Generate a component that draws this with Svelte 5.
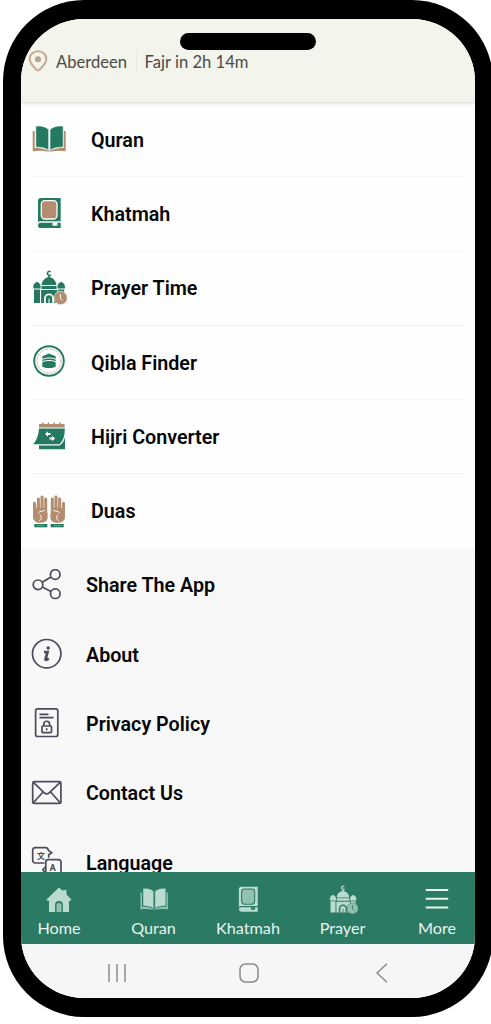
<script>
    let city = 'Aberdeen'
    let nextPrayer = 'Fajr in 2h 14m'

    const features = [
        { name: 'Quran', icon: 'quran' },
        { name: 'Khatmah', icon: 'khatmah' },
        { name: 'Prayer Time', icon: 'prayer' },
        { name: 'Qibla Finder', icon: 'qibla' },
        { name: 'Hijri Converter', icon: 'hijri' },
        { name: 'Duas', icon: 'duas' }
    ]

    const settings = [
        { name: 'Share The App', icon: 'share' },
        { name: 'About', icon: 'about' },
        { name: 'Privacy Policy', icon: 'privacy' },
        { name: 'Contact Us', icon: 'contact' },
        { name: 'Language', icon: 'language' }
    ]

    const tabs = [
        { name: 'Home', icon: 'home' },
        { name: 'Quran', icon: 'quran' },
        { name: 'Khatmah', icon: 'khatmah' },
        { name: 'Prayer', icon: 'prayer' },
        { name: 'More', icon: 'more' }
    ]
</script>

<!-- two-tone icons, shared by the list and the tab bar -->
{#snippet duotone(icon)}
    <svg class="duotone" viewBox="0 0 36 36">
        {#if icon === 'quran'}
            <path class="second" d="M1.700 9h2v17c5 0 9 .4 12.800 2.300h3.400C23.700 26.400 27.700 26 32.700 26V9h2v20.300c-6-.7-10-.7-14 .2h-5c-4-.9-8-.9-14-.2z" />
            <path class="first gap" d="M4.800 4.200c5-.8 9.700.2 12.900 3.500v20.800C14.500 26 10 25 4.800 25.200zM32.200 4.200c-5-.8-10 .2-13.200 3.500v20.800c3.200-2.500 8-3.500 13.200-3.300z" />
        {:else if icon === 'khatmah'}
            <path class="first" d="M10 2h19.700v23.300H9.500c-1 0-1.800.4-2.500 1V5a3 3 0 0 1 3-3z" />
            <rect class="second outline" x="10.300" y="4.700" width="15.700" height="18.300" rx="3.500" />
            <path class="first" d="M9.700 26.800h20V32h-20a2.600 2.600 0 0 1 0-5.200z" />
            <path class="cut" d="M21.500 26.800h5v3.400l-1.200-1-1.300 1-1.300-1-1.200 1z" />
        {:else if icon === 'prayer'}
            <path class="line" d="M19.700 1.800a2 2 0 1 0 .2 3" />
            <path class="first" d="M17.300 5h1.400v2c3.300 1.200 6.300 3.300 6.700 8H10.600c.4-4.700 3.400-6.800 6.700-8zM10.500 16h15v3h-15zM6 11.800c1.700 1 3.600 2.400 3.600 4.500v2.200H2.300v-2.200C2.300 14.200 4.300 12.800 6 11.800zM30.200 11.800c1.700 1 3.700 2.400 3.700 4.500v2.200h-7.400v-2.200c0-2.100 2-3.500 3.700-4.500zM3 19.500h6V33H3zM10.100 20h16.300v13H23v-4.500a5 5 0 0 0-10 0V33h-2.900zM27.300 19.500h5.900V27h-5.900zM14.800 33v-4.500a3.200 3.200 0 0 1 6.400 0V33z" />
            <path class="cutline" d="M18 28.500V33" />
            <circle class="second gap" cx="29.600" cy="28" r="6.700" />
            <path class="cutline" d="M29.400 24.200v4.200l2 2" />
        {:else if icon === 'qibla'}
            <circle class="ring" cx="18" cy="17" r="14.800" />
            <circle class="dots" cx="18" cy="17" r="12" />
            <path class="first" d="M11.300 12.300l6.700-2.800 6.700 2.800V22.500c-2.500 2-10.900 2-13.400 0z" />
            <path class="cutline" d="M11 15.300c4-1.800 10-1.800 14 0M11 17.800c4-1.800 10-1.800 14 0" />
        {:else if icon === 'hijri'}
            <path class="second" d="M8 5h3V3.400h1.500V5h4.200V3.400h1.500V5h4.300V3.400H24V5h4.300V3.400h1.500V5h3.800v3.600H8z" />
            <path class="first" d="M8 9.600h25.800c0 7-1.300 12.300-5.400 15.600H2.300C6 21 7.600 15.500 8 9.600z" />
            <path class="first" d="M34 18v12.300H8v-3.800h20.500c2.800-1.600 4.600-4.200 5.500-8.500z" />
            <path class="cut" d="M14 15l3-2.800v1.900h2.500v1.800H17v1.900zM24 19.500l-3-2.800v1.900h-2.500v1.800H21v1.900z" />
        {:else if icon === 'duas'}
            {@render hand('')}
            {@render hand('translate(36 0) scale(-1 1)')}
        {/if}
    </svg>
{/snippet}

{#snippet hand(flip)}
    <g transform={flip}>
        <path class="second" d="M2 10.500c0-2.200 2.800-2.200 3 0l.3 4.500h.6V6c0-2.100 3-2.100 3 0v8.500h.6V4c0-2.100 3.100-2.100 3.100 0v10.500h.6V6c0-2.100 3-2.100 3 0v12.800c0 .6.400 1 .4 2v3.700c0 3.500-3 5.300-7.300 5.300S2 27.500 2 24z" />
        <path class="cutline" d="M7.500 19.500c1.800-1.700 4.800-1 6.500-2.500M8.200 27.700c2.600-1.500 2.900-4 .6-6.200" />
        <rect class="first" x="3.300" y="31" width="13" height="3.300" />
        <path class="cutline thin" d="M5 32.600h8" />
    </g>
{/snippet}

{#snippet outlined(icon)}
    <svg class="outlined" viewBox="0 0 32 32">
        {#if icon === 'share'}
            <circle cx="24.200" cy="5.500" r="4.800" />
            <circle cx="7" cy="15.800" r="4.800" />
            <circle cx="24.300" cy="24.700" r="4.800" />
            <path d="M11.200 13.300L20 8M11.300 18l8.700 4.500" />
        {:else if icon === 'about'}
            <circle cx="15.700" cy="15.700" r="14.200" />
            <circle class="solid" cx="17.200" cy="10" r="1.700" />
            <path class="heavy" d="M13 14h3.500l-2 7.300c-.2.900.6 1.200 3.300-.6" />
        {:else if icon === 'privacy'}
            <rect x="4.600" y=".9" width="22.200" height="27.600" rx="2" />
            <path d="M8.500 6.300h9M8.500 9.600h14" />
            <rect x="11" y="18" width="9.500" height="6.600" rx=".8" />
            <path d="M12.800 18v-2c0-3.700 5.800-3.700 5.800 0v2M15.700 20.300v2" />
        {:else if icon === 'contact'}
            <rect x="1.700" y="4.700" width="28.200" height="21.700" rx="1.500" />
            <path d="M2.200 5.200L13 15.700c1.900 1.800 3.500 1.800 5.400 0L29.400 5.200M2.200 26l9.800-11M29.400 26l-9.800-11" />
        {:else if icon === 'language'}
            <path d="M13.500 17H4.200a2.500 2.500 0 0 1-2.500-2.500V4.200a2.500 2.500 0 0 1 2.500-2.500h10.300c1.600 0 2.500 1 3 2.800l3.200 2.300-3 2v3" />
            <path d="M14.800 30V16a2.400 2.400 0 0 1 2.400-2.400h10.400a2.400 2.400 0 0 1 2.400 2.400v14M14.800 20.500l-3 3.300 2.500 3" />
            <text x="6" y="12.500" class="glyph">文</text>
            <text x="18.600" y="25" class="letter">A</text>
        {/if}
    </svg>
{/snippet}

<div class="phone">
    <div class="island"></div>
    <header>
        <svg class="pin" viewBox="0 0 20 22">
            <path d="M10 1.300c-5 0-8.300 3.400-8.300 7.700 0 4.500 4.300 8 7 10.900.8.800 1.800.8 2.600 0 2.700-2.900 7-6.400 7-10.900 0-4.300-3.300-7.700-8.300-7.700z" />
            <circle cx="10" cy="9.300" r="3" />
        </svg>
        <span class="city">{city}</span>
        <span class="next">{nextPrayer}</span>
    </header>

    <main>
        <ul class="features">
            {#each features as item}
                <li>
                    {@render duotone(item.icon)}
                    <span>{item.name}</span>
                </li>
            {/each}
        </ul>
        <ul class="settings">
            {#each settings as item}
                <li>
                    {@render outlined(item.icon)}
                    <span>{item.name}</span>
                </li>
            {/each}
        </ul>
    </main>

    <nav>
        {#each tabs as tab}
            <div class="tab">
                {#if tab.icon === 'home'}
                    <svg class="duotone" viewBox="0 0 36 36">
                        <path class="first" d="M18 3l5 4.600V6h4v5.300L33 17.500 31.500 19H30v13.500h-7.300v-8.500a4.700 4.700 0 0 0-9.400 0v8.500H6V19H4.500L3 17.500z" />
                        <path class="second" d="M15 32.500v-8a3 3 0 0 1 6 0v8z" />
                    </svg>
                {:else if tab.icon === 'more'}
                    <svg class="duotone" viewBox="0 0 36 36">
                        <path class="bars" d="M4.500 6h27M4.500 16.500h27M4.500 27h27" />
                    </svg>
                {:else}
                    {@render duotone(tab.icon)}
                {/if}
                <span>{tab.name}</span>
            </div>
        {/each}
    </nav>

    <footer>
        <svg viewBox="0 0 22 22"><path d="M3 2v18M11 2v18M19 2v18" /></svg>
        <svg viewBox="0 0 22 22"><rect x="2" y="2" width="18" height="18" rx="5.500" /></svg>
        <svg viewBox="0 0 22 22"><path d="M16 1.700L6 11l10 9.300" /></svg>
    </footer>
</div>

<style>
    :global(body) {
        background: #fff;
        overflow: hidden;
    }
    .phone {
        position: relative;
        box-sizing: border-box;
        display: flex;
        flex-direction: column;
        width: 490px;
        height: 1017px;
        margin-left: 3px;
        border: 18.500px solid #000;
        border-top-width: 19px;
        border-bottom-width: 19px;
        border-radius: 81px;
        overflow: hidden;
        background: #f6f6f9;
    }
    .island {
        position: absolute;
        top: 14px;
        left: 159px;
        width: 136px;
        height: 17px;
        border-radius: 9px;
        background: #000;
        z-index: 2;
    }
    header {
        display: flex;
        align-items: center;
        box-sizing: border-box;
        flex: none;
        height: 83px;
        padding: 2px 0 0 6.500px;
        background: #f3f4eb;
        box-shadow: 0 1px 4px rgba(0, 0, 0, .18);
        color: #4b4b48;
        font-family: Lato, sans-serif;
        font-size: 16.600px;
        z-index: 1;
    }
    .pin {
        width: 20px;
        height: 22px;
        margin-top: -2px;
        fill: none;
        stroke: #c9aa94;
        stroke-width: 2;
    }
    .pin circle {
        fill: #b6a18c;
        stroke: none;
    }
    .city {
        margin-left: 8.500px;
        padding-right: 8.500px;
        border-right: 1px solid #e8e9e1;
    }
    .next {
        margin-left: 8px;
    }
    main {
        flex: 1;
        min-height: 0;
        overflow: hidden;
        background: #f8f8f9;
        color: #060606;
        font-family: Roboto, sans-serif;
        font-size: 19.700px;
        font-weight: 600;
    }
    ul {
        margin: 0;
        padding: 0;
        list-style: none;
    }
    li {
        display: flex;
        align-items: center;
        box-sizing: border-box;
    }
    li span {
        padding-top: 1.500px;
    }
    .features {
        --first: #247960;
        --second: #b48d70;
        --back: #fefefe;
        padding: 1px 10px 0 9.500px;
        background: #fefefe;
    }
    .features li {
        height: 74.250px;
        border-bottom: 1px solid #f4f4f4;
    }
    .features li:last-child {
        border-color: transparent;
    }
    .features .duotone {
        width: 36px;
        height: 36px;
        margin-right: 24.500px;
    }
    .settings {
        padding: 2px 10px 0 9.500px;
    }
    .settings li {
        height: 69.300px;
    }
    .outlined {
        width: 32px;
        height: 32px;
        margin-right: 23.500px;
        fill: none;
        stroke: #4b4b5c;
        stroke-width: 1.700;
    }
    .outlined .solid {
        fill: #4b4b5c;
        stroke: none;
    }
    .outlined .heavy {
        stroke-width: 2.700;
    }
    .outlined text {
        fill: #4b4b5c;
        stroke: none;
        font-weight: 700;
    }
    .glyph {
        font: 8px "Noto Sans CJK SC", sans-serif;
    }
    .letter {
        font-size: 9.500px;
    }
    .first {
        fill: var(--first);
    }
    .second {
        fill: var(--second);
    }
    .cut {
        fill: var(--back);
    }
    .cutline {
        fill: none;
        stroke: var(--back);
        stroke-width: 1;
    }
    .thin {
        stroke-width: .6;
        opacity: .5;
    }
    .gap {
        stroke: var(--back);
        stroke-width: .6;
    }
    .outline {
        stroke: var(--back);
        stroke-width: 1.300;
    }
    .line {
        fill: none;
        stroke: var(--first);
        stroke-width: 1.500;
    }
    .ring {
        fill: none;
        stroke: var(--first);
        stroke-width: 1.900;
    }
    .dots {
        fill: none;
        stroke: var(--second);
        stroke-width: 1;
        stroke-dasharray: 1 1;
    }
    .bars {
        stroke: #e5f1ec;
        stroke-width: 2.400;
    }
    nav {
        --first: #bcdbd0;
        --second: #93c1b1;
        --back: #2b7a63;
        display: flex;
        flex: none;
        justify-content: center;
        height: 72px;
        background: #2b7a63;
    }
    .tab {
        display: flex;
        flex: none;
        flex-direction: column;
        align-items: center;
        width: 94.500px;
        padding-top: 13px;
        box-sizing: border-box;
        color: #e9f4f0;
        font-family: Lato, sans-serif;
        font-size: 16.200px;
        line-height: 20px;
    }
    .tab .duotone {
        width: 30px;
        height: 30px;
        margin-bottom: 3px;
    }
    footer {
        display: flex;
        flex: none;
        align-items: center;
        justify-content: space-between;
        box-sizing: border-box;
        height: 54px;
        padding: 4px 82px 0 84.500px;
        background: #f6f6f9;
    }
    footer svg {
        width: 22px;
        height: 22px;
        fill: none;
        stroke: #8b8b8e;
        stroke-width: 1.500;
    }
</style>
